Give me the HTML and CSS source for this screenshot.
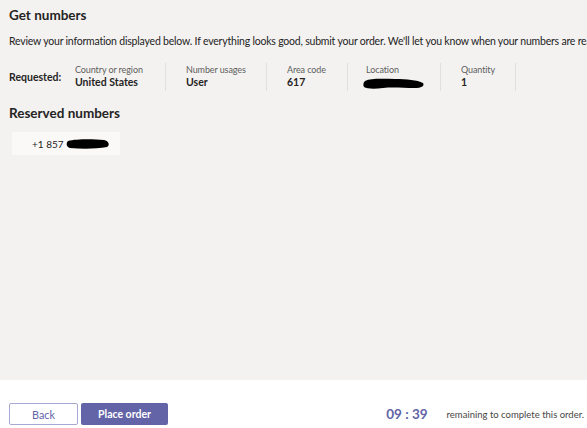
FILE: index.html
```html
<!DOCTYPE html>
<html>
<head>
  <title>Get numbers</title>
  <link rel="stylesheet" href="styles.css">
</head>
<body>
  <main class="page">
    <h1 class="heading">Get numbers</h1>
    <p class="intro">Review your information displayed below. If everything looks good, submit your order. We'll let you know when your numbers are ready.</p>

    <div class="summary">
      <span class="summary-label">Requested:</span>
      <div class="field field-country">
        <span class="field-name">Country or region</span>
        <span class="field-value">United States</span>
      </div>
      <div class="field field-usage">
        <span class="field-name">Number usages</span>
        <span class="field-value">User</span>
      </div>
      <div class="field field-area">
        <span class="field-name">Area code</span>
        <span class="field-value">617</span>
      </div>
      <div class="field field-location">
        <span class="field-name">Location</span>
        <span class="field-value">
          <svg class="scribble" width="62" height="13" viewBox="0 0 62 13">
            <path d="M2 4 C8 1 20 2 32 2 C44 2 54 3 60 6 C62 9 58 11 52 11 C40 11 30 10 20 11 C12 12 4 12 1 10 C0 8 0 6 2 4 Z" fill="#000"/>
          </svg>
        </span>
      </div>
      <div class="field field-qty">
        <span class="field-name">Quantity</span>
        <span class="field-value">1</span>
      </div>
    </div>

    <h2 class="heading heading-reserved">Reserved numbers</h2>
    <div class="number-chip">
      <span>+1 857</span>
      <svg class="scribble" width="44" height="10" viewBox="0 0 44 10">
        <path d="M2 2 C10 0 26 0 38 1 C43 2 44 6 41 8 C30 10 16 10 4 9 C0 8 0 4 2 2 Z" fill="#000"/>
      </svg>
    </div>
  </main>

  <footer class="footer">
    <button class="btn btn-back">Back</button>
    <button class="btn btn-primary">Place order</button>
    <div class="timer">
      <span class="timer-count">09 : 39</span>
      <span class="timer-text">remaining to complete this order.</span>
    </div>
  </footer>
</body>
</html>
```

FILE: styles.css
```css
* {
  margin: 0;
  padding: 0;
  box-sizing: border-box;
}

body {
  font-family: Lato, "Open Sans", Arial, sans-serif;
  color: #252423;
  width: 587px;
  height: 428px;
  overflow: hidden;
  background-color: #ffffff;
}

.page {
  height: 380px;
  background-color: #f3f2f1;
  padding: 5px 0 0 9px;
  white-space: nowrap;
  overflow: hidden;
}

.heading {
  font-size: 13.5px;
  font-weight: 700;
  line-height: 20px;
}

.intro {
  font-size: 10.5px;
  letter-spacing: -0.2px;
  line-height: 16px;
  margin-top: 8px;
}

.summary {
  display: flex;
  align-items: center;
  margin-top: 14px;
}

.summary-label {
  font-size: 10.5px;
  font-weight: 700;
  width: 66px;
}

.field {
  display: flex;
  flex-direction: column;
  height: 28px;
  justify-content: center;
  border-right: 1px solid #e1dfdd;
  padding-left: 20px;
}

.field-country {
  padding-left: 0;
  width: 91px;
}
.field-usage { width: 101px; }
.field-area { width: 81px; }
.field-location { width: 93px; padding-left: 18px; }
.field-qty { width: 75px; }

.field-name {
  font-size: 9px;
  letter-spacing: -0.1px;
  line-height: 11px;
  color: #605e5c;
}

.field-value {
  font-size: 10.5px;
  font-weight: 700;
  line-height: 15px;
  height: 15px;
}

.scribble {
  display: inline-block;
  vertical-align: middle;
}

.field-location .scribble {
  margin-left: -3px;
}

.heading-reserved {
  margin-top: 12px;
}

.number-chip {
  display: flex;
  align-items: center;
  gap: 2px;
  width: 108px;
  height: 23px;
  margin: 9px 0 0 3px;
  padding-left: 20px;
  background-color: #faf9f8;
  font-size: 10px;
}

.footer {
  display: flex;
  align-items: center;
  height: 48px;
  padding: 22px 3px 2px 9px;
}

.btn {
  height: 22px;
  font-family: inherit;
  font-size: 10.8px;
  border-radius: 2px;
  cursor: pointer;
}

.btn-back {
  width: 69px;
  background-color: #ffffff;
  color: #6264a7;
  border: 1px solid #a7a8d3;
}

.btn-primary {
  width: 87px;
  margin-left: 3px;
  background-color: #6264a7;
  color: #ffffff;
  font-size: 10.5px;
  font-weight: 700;
  border: none;
}

.timer {
  margin-left: auto;
  display: flex;
  align-items: center;
  gap: 19px;
}

.timer-count {
  font-size: 13.5px;
  font-weight: 700;
  color: #6264a7;
}

.timer-text {
  font-size: 9.5px;
  color: #484644;
}
```
